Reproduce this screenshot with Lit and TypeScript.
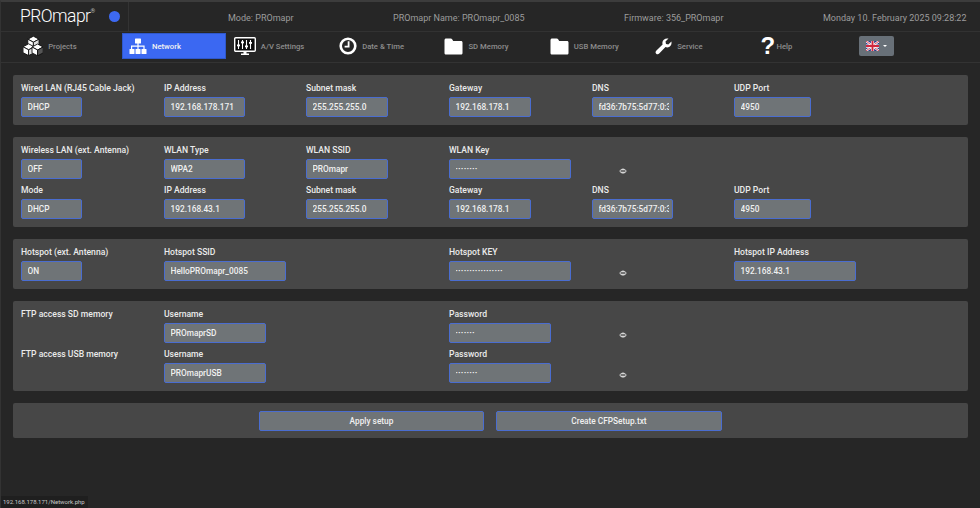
import { LitElement, html, css, svg } from "lit";
import { customElement } from "lit/decorators.js";

type Field = { label?: string; value?: string; dots?: number; w?: string; eye?: boolean; span?: number; empty?: boolean };

const cube = (x: number, y: number, dark = false) => svg`
  <g stroke="#111" stroke-width="0.9" stroke-linejoin="round">
    <polygon points="${x},${y - 5.8} ${x + 5.6},${y - 2.8} ${x},${y + 0.2} ${x - 5.6},${y - 2.8}" fill="#fff"/>
    <polygon points="${x - 5.6},${y - 2.8} ${x},${y + 0.2} ${x},${y + 6} ${x - 5.6},${y + 3.1}" fill="#fff"/>
    <polygon points="${x + 5.6},${y - 2.8} ${x},${y + 0.2} ${x},${y + 6} ${x + 5.6},${y + 3.1}" fill="${dark ? "#555" : "#ddd"}"/>
  </g>`;

const icons: Record<string, unknown> = {
  projects: html`<svg width="20" height="20" viewBox="0 0 20 20">${cube(10.4, 6)}${cube(5.6, 13.6)}${cube(14.6, 13.8, true)}</svg>`,
  network: html`<svg width="18" height="17" viewBox="0 0 18 17" fill="#fff">
    <rect x="6" y="0.5" width="6" height="5" rx="0.6"/>
    <rect x="0.5" y="11" width="5" height="5" rx="0.6"/><rect x="6.5" y="11" width="5" height="5" rx="0.6"/><rect x="12.5" y="11" width="5" height="5" rx="0.6"/>
    <path d="M8.4 5h1.2v2.6h6v3.6h-1.2V8.8H9.6v2.4H8.4V8.8H3.2v2.4H2V7.6h6.4z"/></svg>`,
  av: html`<svg width="22" height="19" viewBox="0 0 22 19">
    <rect x="0.7" y="0.7" width="20.6" height="13.6" rx="1" fill="#0c0c0c" stroke="#fff" stroke-width="1.4"/>
    <g stroke="#fff" stroke-width="1.1"><path d="M4.5 3v9M8.5 3v9M12.5 3v9M16.5 3v9" /></g>
    <g fill="#fff"><rect x="3" y="7.5" width="3" height="1.8"/><rect x="7" y="4.5" width="3" height="1.8"/><rect x="11" y="8.5" width="3" height="1.8"/><rect x="15" y="5" width="3" height="1.8"/></g>
    <path d="M9.5 15h3v1.6h2.5V18H7v-1.4h2.5z" fill="#fff"/></svg>`,
  clock: html`<svg width="18" height="18" viewBox="0 0 18 18" fill="none" stroke="#fff">
    <circle cx="9" cy="9" r="7.3" stroke-width="2.6"/><path d="M9.6 4.2v5.4H5.6" stroke-width="1.8"/></svg>`,
  folder: html`<svg width="19" height="17" viewBox="0 0 19 17"><path d="M0.5 2.2C0.5 1.2 1.2.5 2.2.5h4.4c.8 0 1.3.4 1.7 1l.9 1.4h7.8c1 0 1.5.7 1.5 1.6v10.4c0 1-.7 1.6-1.6 1.6H2.2c-1 0-1.7-.7-1.7-1.6z" fill="#fff"/></svg>`,
  wrench: html`<svg width="17" height="17" viewBox="0 0 17 17"><path d="M16.4 3.4c.5 2.2-.2 4.2-1.9 5.3-1.2.8-2.7.9-4 .4l-6.3 6.5c-.8.9-2.2 1-3 .1-.9-.8-.8-2.2 0-3l6.4-6.3C7.1 5 7.4 3 8.8 1.7 10.1.5 11.9.1 13.5.6l-3 3 .5 2.3 2.3.6z" fill="#fff"/></svg>`,
};

const nav = [
  { t: "Projects", i: "projects" },
  { t: "Network", i: "network", on: true },
  { t: "A/V Settings", i: "av" },
  { t: "Date & Time", i: "clock" },
  { t: "SD Memory", i: "folder" },
  { t: "USB Memory", i: "folder" },
  { t: "Service", i: "wrench" },
  { t: "Help", i: "help" },
];

const W_SM = "61px", W_A = "81px", W_B = "82px", W_UDP = "77px", W_XL = "122px", W_LG = "102px";
const lanRow = (first: Field, ip: string): Field[] => [
  first,
  { label: "IP Address", value: ip, w: W_A },
  { label: "Subnet mask", value: "255.255.255.0", w: W_B },
  { label: "Gateway", value: "192.168.178.1", w: W_B },
  { label: "DNS", value: "fd36:7b75:5d77:0:3", w: W_A },
  { label: "UDP Port", value: "4950", w: W_UDP },
];

const panels: Field[][][] = [
  [lanRow({ label: "Wired LAN (RJ45 Cable Jack)", value: "DHCP", w: W_SM }, "192.168.178.171")],
  [
    [
      { label: "Wireless LAN (ext. Antenna)", value: "OFF", w: W_SM },
      { label: "WLAN Type", value: "WPA2", w: W_A },
      { label: "WLAN SSID", value: "PROmapr", w: W_B },
      { label: "WLAN Key", dots: 8, w: W_XL },
      { eye: true },
      { empty: true },
    ],
    lanRow({ label: "Mode", value: "DHCP", w: W_SM }, "192.168.43.1"),
  ],
  [
    [
      { label: "Hotspot (ext. Antenna)", value: "ON", w: W_SM },
      { label: "Hotspot SSID", value: "HelloPROmapr_0085", w: W_XL, span: 2 },
      { label: "Hotspot KEY", dots: 17, w: W_XL },
      { eye: true },
      { label: "Hotspot IP Address", value: "192.168.43.1", w: W_XL },
    ],
  ],
  [
    [
      { label: "FTP access SD memory" },
      { label: "Username", value: "PROmaprSD", w: W_LG, span: 2 },
      { label: "Password", dots: 7, w: W_LG },
      { eye: true },
      { empty: true },
    ],
    [
      { label: "FTP access USB memory" },
      { label: "Username", value: "PROmaprUSB", w: W_LG, span: 2 },
      { label: "Password", dots: 8, w: W_LG },
      { eye: true },
      { empty: true },
    ],
  ],
];

@customElement("app-root")
export class AppRoot extends LitElement {
  static styles = css`
    :host {
      display: block;
      position: relative;
      width: 980px;
      height: 508px;
      overflow: hidden;
      background: #262626;
      font-family: Roboto, "Liberation Sans", sans-serif;
      box-sizing: border-box;
      border-top: 2px solid #3c3c3c;
      border-left: 1px solid #333;
    }
    * { box-sizing: border-box; }
    .top {
      display: flex;
      height: 30px;
      border-bottom: 1px solid #323232;
      color: #9c9c9c;
      font-size: 9px;
      align-items: center;
    }
    .brand {
      display: flex;
      align-items: center;
      width: 128px;
      height: 100%;
      padding-left: 19px;
      border-right: 1px solid #333;
      flex: none;
    }
    .logo {
      color: #fff;
      font-size: 17.5px;
      font-weight: 300;
      letter-spacing: -0.55px;
      line-height: 1;
    }
    .reg {
      font-size: 6px;
      color: #bbb;
      align-self: flex-start;
      margin-top: 5px;
    }
    .dot {
      width: 11px;
      height: 11px;
      border-radius: 50%;
      background: #3d69f2;
      margin-left: 14px;
    }
    .info { flex: none; white-space: nowrap; margin-top: 3px; }
    .i1 { margin-left: 99px; width: 165px; }
    .i2 { width: 231px; }
    .i3 { width: 199px; }
    .nav {
      display: flex;
      align-items: center;
      height: 31px;
      padding: 0 0 2px 15.67px;
      border-bottom: 1px solid #333;
      gap: 1px;
    }
    .tab {
      display: flex;
      align-items: center;
      gap: 5px;
      width: 104.33px;
      height: 26px;
      padding-left: 6.5px;
      font-size: 7.7px;
      font-weight: 500;
      color: #8d8d8d;
      flex: none;
      white-space: nowrap;
    }
    .tab.on {
      background: #3b68f2;
      color: #f2f2f2;
      border: 1px solid #2f58cc;
      padding-left: 6px;
    }
    .help {
      width: 11px;
      color: #fff;
      font-size: 24px;
      font-weight: 700;
      line-height: 20px;
      text-align: center;
      font-family: "Liberation Sans", sans-serif;
    }
    .flag {
      display: flex;
      align-items: center;
      justify-content: center;
      gap: 4px;
      width: 35px;
      height: 20px;
      background: #687078;
      border-radius: 2px;
      margin: -1px 0 0 -0.33px;
    }
    .caret {
      width: 0;
      height: 0;
      border: 2px solid transparent;
      border-top-color: #fff;
      border-bottom: 0;
    }
    main {
      display: flex;
      flex-direction: column;
      gap: 12px;
      padding: 12px 0 0 12px;
    }
    .panel {
      width: 955px;
      padding: 2px 8px 8px;
      background: #474747;
      border-radius: 2px;
      display: flex;
      flex-direction: column;
    }
    .row {
      display: grid;
      grid-template-columns: 143px 142px 143px 143px 142px 143px;
    }
    .span2 { grid-column: span 2; }
    .label {
      height: 20px;
      line-height: 22px;
      font-size: 8.6px;
      font-weight: 500;
      color: #ebebeb;
      white-space: nowrap;
    }
    .input {
      height: 20px;
      line-height: 18px;
      padding: 0 3.5px 0 5.5px;
      background: #6f7477;
      border: 1px solid #4a6dd0;
      border-radius: 2px;
      color: #f0f0f0;
      font-size: 8.3px;
      font-weight: 500;
    }
    .clip {
      display: block;
      overflow: hidden;
      white-space: nowrap;
    }
    .dots {
      font-size: 6px;
      letter-spacing: 0.7px;
      color: #fff;
    }
    .eyecell {
      display: flex;
      align-items: flex-end;
      padding: 0 0 5.4px 26.7px;
    }
    .actions {
      flex-direction: row;
      justify-content: center;
      gap: 12px;
      padding: 8px 8px 7px;
    }
    .btn {
      width: 225px;
      height: 20px;
      line-height: 18px;
      text-align: center;
      background: #6f7477;
      border: 1px solid #4a6dd0;
      border-radius: 2px;
      color: #f0f0f0;
      font-size: 8.3px;
      font-weight: 500;
    }
    .btn + .btn { width: 226px; }
    .status {
      position: absolute;
      left: -1px;
      bottom: 0;
      height: 12px;
      padding: 0 3px;
      line-height: 12px;
      background: #1f1f1f;
      color: #c8c8c8;
      font-size: 6px;
      white-space: nowrap;
    }
  `;

  private field(f: Field) {
    if (f.empty) return html`<div></div>`;
    if (f.eye)
      return html`<div class="eyecell">
        <svg width="8" height="6" viewBox="0 0 8 6">
          <path d="M0.3 3C1.5 1.2 2.7.4 4 .4S6.5 1.2 7.7 3C6.5 4.8 5.3 5.6 4 5.6S1.5 4.8.3 3z" fill="#d6d6d6"/>
          <rect x="1.6" y="2.4" width="4.8" height="1.2" fill="#333"/>
        </svg>
      </div>`;
    return html`<div class=${f.span ? "span2" : ""}>
      <div class="label">${f.label}</div>
      ${f.w
        ? html`<div class="input" style="width:${f.w}"><span class="clip ${f.dots ? "dots" : ""}">${f.dots ? "•".repeat(f.dots) : f.value}</span></div>`
        : ""}
    </div>`;
  }

  render() {
    return html`
      <header class="top">
        <div class="brand">
          <span class="logo">PROmapr</span><span class="reg">®</span><span class="dot"></span>
        </div>
        <div class="info i1">Mode: PROmapr</div>
        <div class="info i2">PROmapr Name: PROmapr_0085</div>
        <div class="info i3">Firmware: 356_PROmapr</div>
        <div class="info">Monday 10. February 2025 09:28:22</div>
      </header>
      <nav class="nav">
        ${nav.map(
          (n) => html`<div class="tab ${n.on ? "on" : ""}">
            ${n.i === "help" ? html`<span class="help">?</span>` : icons[n.i]}<span>${n.t}</span>
          </div>`
        )}
        <div class="flag">
          <svg width="13" height="10" viewBox="0 0 60 46">
            <rect width="60" height="46" fill="#2b3a8c"/>
            <path d="M0 0L60 46M60 0L0 46" stroke="#fff" stroke-width="10"/>
            <path d="M0 0L60 46M60 0L0 46" stroke="#d0273e" stroke-width="4"/>
            <path d="M30 0V46M0 23H60" stroke="#fff" stroke-width="15"/>
            <path d="M30 0V46M0 23H60" stroke="#d0273e" stroke-width="9"/>
          </svg>
          <span class="caret"></span>
        </div>
      </nav>
      <main>
        ${panels.map(
          (p) => html`<section class="panel">
            ${p.map((r) => html`<div class="row">${r.map((f) => this.field(f))}</div>`)}
          </section>`
        )}
        <section class="panel actions">
          <div class="btn">Apply setup</div>
          <div class="btn">Create CFPSetup.txt</div>
        </section>
      </main>
      <div class="status">192.168.178.171/Network.php</div>
    `;
  }
}
